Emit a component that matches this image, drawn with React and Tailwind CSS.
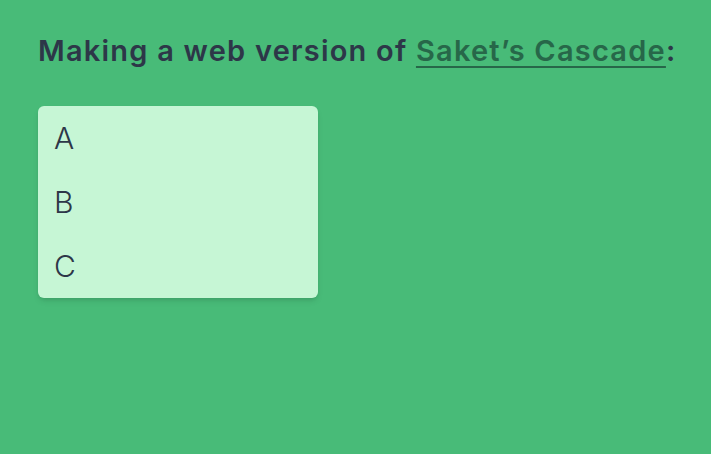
import React from 'react';

const items = ['A', 'B', 'C'];

const App = () => {
  return (
    <div className="min-h-screen w-full bg-[#48bb78] pl-[38px] pr-4 pt-[31px] text-[#2d3748]" style={{ fontFamily: 'Inter, "Noto Sans", sans-serif' }}>
      <h1 className="whitespace-nowrap text-[29px] leading-[40px] font-semibold tracking-[0.042em]">
        Making a web version of{' '}
        <a href="#" className="text-[#276749] underline underline-offset-[5px] decoration-[2px]">Saket’s Cascade</a>:
      </h1>

      <ul className="mt-[35px] w-[280px] rounded-md bg-[#c6f6d5] shadow-md">
        {items.map((item) => (
          <li key={item} className="px-4 py-[14px] text-3xl leading-9 font-light">
            {item}
          </li>
        ))}
      </ul>
    </div>
  );
};

export default App;
